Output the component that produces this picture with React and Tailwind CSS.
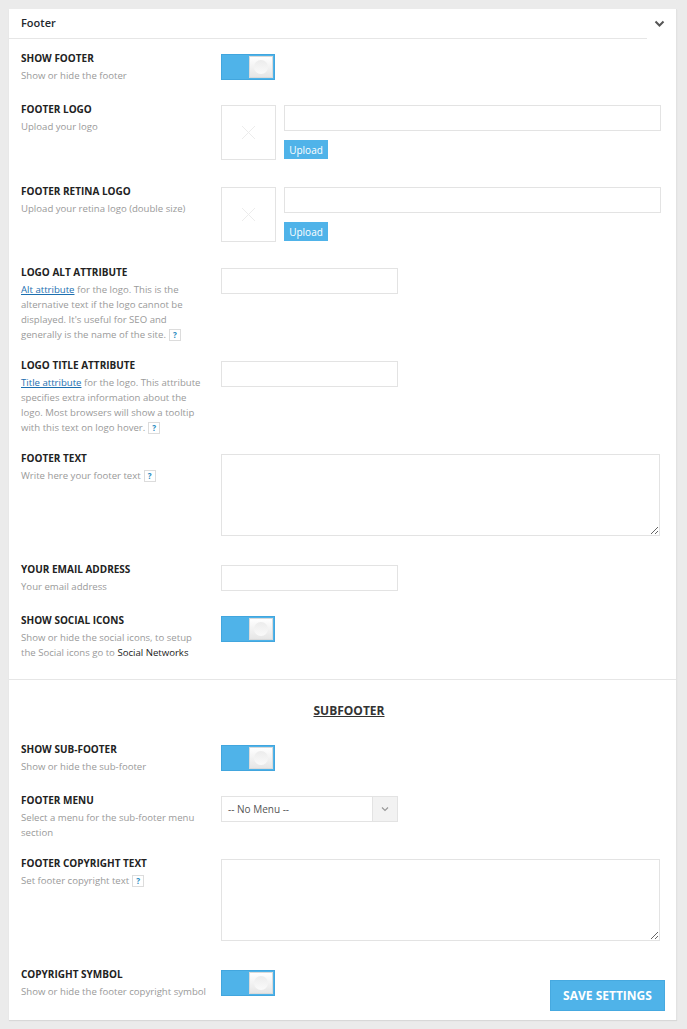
import React from "react";

const font = { fontFamily: '"Open Sans", "Liberation Sans", sans-serif' };

// Blue on/off switch, always on
function Toggle() {
  return (
    <div className="flex h-[26px] w-[54px] items-center justify-end border border-[#42a6de] bg-[#4fb3e9] pr-[1px]">
      <div className="flex h-[22px] w-[24px] items-center justify-center border border-[#dadada] bg-linear-to-b from-white to-[#e6e6e6]">
        <div className="h-[14px] w-[14px] rounded-full bg-linear-to-b from-[#ececec] to-[#fafafa]" />
      </div>
    </div>
  );
}

function Help() {
  return (
    <span className="ml-[3px] inline-flex h-[12px] w-[12px] items-center justify-center border border-[#dcdcdc] align-middle text-[8px] font-bold leading-none text-[#1f8ac0]">
      ?
    </span>
  );
}

function ImageUpload() {
  return (
    <div className="flex gap-[8px]">
      <div className="flex h-[55px] w-[55px] items-center justify-center border border-[#e3e3e3]">
        <svg width="15" height="15" viewBox="0 0 15 15">
          <path d="M1 1L14 14M14 1L1 14" stroke="#ececec" strokeWidth="1" />
        </svg>
      </div>
      <div className="flex flex-col">
        <div className="h-[26px] w-[377px] border border-[#e3e3e3]" />
        <button className="mt-[9px] h-[19px] w-[44px] bg-[#4fb3e9] text-[10px] leading-none text-white">
          Upload
        </button>
      </div>
    </div>
  );
}

function TextInput() {
  return <input className="h-[26px] w-[177px] border border-[#e3e3e3] bg-white outline-none" />;
}

function TextArea() {
  return <textarea className="block h-[82px] w-[439px] border border-[#e3e3e3] bg-white outline-none" />;
}

function Row({ title, children, control, className = "" }) {
  return (
    <div className={`flex items-start ${className}`}>
      <div className="w-[200px] shrink-0 pr-[13px]">
        <div className="text-[10px] font-bold leading-[14px] text-[#222]">{title}</div>
        <div className="mt-[3px] text-[9.6px] leading-[15px] text-[#9a9a9a]">{children}</div>
      </div>
      <div className="pt-[3px]">{control}</div>
    </div>
  );
}

export default function App() {
  return (
    <div className="min-h-[1029px] bg-[#ebebeb] px-[9px] pt-[9px]" style={font}>
      <div className="w-[668px] border-r border-[#e2e2e2] bg-white shadow-[0_1px_1px_rgba(0,0,0,0.08)]">
        {/* Header */}
        <div className="flex h-[29px] items-center justify-between pl-[12px] pr-[11px]">
          <span className="text-[11px] font-semibold text-[#23282d]">Footer</span>
          <svg width="11" height="8" viewBox="0 0 11 8">
            <path d="M1.5 1.5L5.5 5.5L9.5 1.5" stroke="#555" strokeWidth="2" fill="none" />
          </svg>
        </div>
        <div className="h-px w-[638px] bg-[#e6e6e6]" />

        {/* Footer options */}
        <div className="pl-[12px] pt-[12px]">
          <Row title="SHOW FOOTER" control={<Toggle />} className="mb-[19px]">
            Show or hide the footer
          </Row>
          <Row title="FOOTER LOGO" control={<ImageUpload />} className="mb-[24px]">
            Upload your logo
          </Row>
          <Row title="FOOTER RETINA LOGO" control={<ImageUpload />} className="mb-[23px]">
            Upload your retina logo (double size)
          </Row>
          <Row title="LOGO ALT ATTRIBUTE" control={<TextInput />} className="mb-[16px]">
            <a className="text-[#1c6fb0] underline">Alt attribute</a> for the logo. This is the alternative text if
            the logo cannot be displayed. It's useful for SEO and generally is the name of the site.
            <Help />
          </Row>
          <Row title="LOGO TITLE ATTRIBUTE" control={<TextInput />} className="mb-[16px]">
            <a className="text-[#1c6fb0] underline">Title attribute</a> for the logo. This attribute specifies extra
            information about the logo. Most browsers will show a tooltip with this text on logo hover.
            <Help />
          </Row>
          <Row title="FOOTER TEXT" control={<TextArea />} className="mb-[26px]">
            Write here your footer text
            <Help />
          </Row>
          <Row title="YOUR EMAIL ADDRESS" control={<TextInput />} className="mb-[19px]">
            Your email address
          </Row>
          <Row title="SHOW SOCIAL ICONS" control={<Toggle />} className="pb-[19px]">
            Show or hide the social icons, to setup the Social icons go to{" "}
            <span className="text-[#222]">Social Networks</span>
          </Row>
        </div>

        {/* Subfooter */}
        <div className="border-t border-[#e6e6e6] pb-[9px] pl-[12px] pr-[11px] pt-[23px]">
          <div className="mb-[23px] pl-[12px] text-center text-[12px] font-bold leading-[16px] text-[#333] underline">
            SUBFOOTER
          </div>
          <Row title="SHOW SUB-FOOTER" control={<Toggle />} className="mb-[19px]">
            Show or hide the sub-footer
          </Row>
          <Row
            title="FOOTER MENU"
            className="mb-[16px]"
            control={
              <div className="flex h-[26px] w-[177px] items-stretch border border-[#e3e3e3]">
                <span className="flex flex-1 items-center pl-[6px] text-[10px] text-[#555]">-- No Menu --</span>
                <span className="flex w-[25px] items-center justify-center border-l border-[#e3e3e3] bg-[#f2f2f2]">
                  <svg width="8" height="6" viewBox="0 0 8 6">
                    <path d="M1 1.5L4 4.5L7 1.5" stroke="#999" strokeWidth="1.2" fill="none" />
                  </svg>
                </span>
              </div>
            }
          >
            Select a menu for the sub-footer menu section
          </Row>
          <Row title="FOOTER COPYRIGHT TEXT" control={<TextArea />} className="mb-[26px]">
            Set footer copyright text
            <Help />
          </Row>
          <div className="flex items-start">
            <Row title="COPYRIGHT SYMBOL" control={<Toggle />}>
              Show or hide the footer copyright symbol
            </Row>
            <button className="ml-auto mt-[13px] h-[31px] w-[115px] border border-[#46a9e0] bg-[#4fb3e9] text-[12px] font-bold text-white">
              SAVE SETTINGS
            </button>
          </div>
        </div>
      </div>
    </div>
  );
}
